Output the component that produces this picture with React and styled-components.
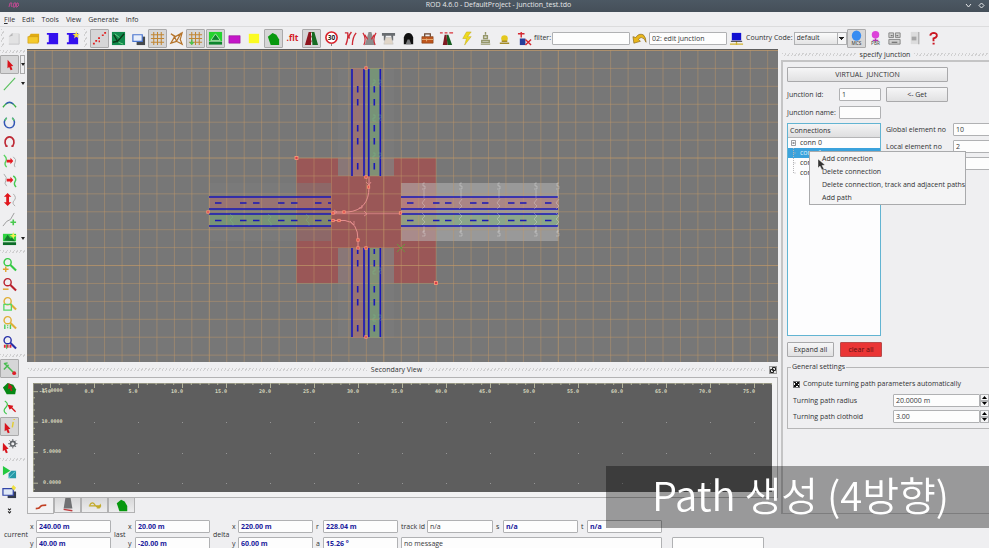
import React from "react";
import styled, { createGlobalStyle, css } from "styled-components";

const GlobalStyle = createGlobalStyle`
  * { box-sizing: border-box; }
  html, body { margin: 0; height: 100%; overflow: hidden; }
  body, button, input, select { font-family: "Open Sans", "Noto Sans", sans-serif; font-size: 7px; line-height: 10px; color: #303133; }
  button, input, select { margin: 0; padding: 0; border-radius: 0; }
`;

const hatch = css`
  background-image: repeating-linear-gradient(120deg, #d0d0d1 0 1px, transparent 1px 3px);
`;

const Window = styled.div`
  display: flex;
  flex-direction: column;
  height: 100vh;
  overflow: hidden;
  background: #efeff1;
`;

const TitleBar = styled.header`
  display: grid;
  grid-template-columns: 1fr auto 1fr;
  align-items: center;
  flex: none;
  height: 12px;
  padding: 0 0 3px 8px;
  background: linear-gradient(#4c5863, #454f59);
  color: #e6e8ea;
`;

const AppTag = styled.svg`
  width: 11px;
  height: 6px;
`;

const WindowButtons = styled.div`
  display: flex;
  justify-content: flex-end;
  gap: 4px;
  height: 9px;
  padding-right: 3px;
`;

const WindowButton = styled.button`
  width: 9px;
  height: 9px;
  border: 0;
  background: none;
  svg { display: block; width: 9px; height: 9px; }
`;

const MenuBar = styled.nav`
  display: flex;
  align-items: center;
  gap: 7px;
  flex: none;
  height: 15px;
  padding: 2px 0 0 4px;
  border-bottom: 1px solid #dcdcdd;
`;

const MenuItem = styled.button`
  border: 0;
  background: none;
`;

const ToolBar = styled.div`
  display: flex;
  align-items: center;
  flex: none;
  height: 22px;
  padding-left: 1px;
`;

const Grip = styled.span`
  flex: none;
  width: ${(p) => (p.$vertical ? "3px" : "auto")};
  height: ${(p) => (p.$vertical ? "18px" : "3px")};
  ${hatch}
`;

const ToolGroup = styled.div`
  display: flex;
  flex: none;
  flex-direction: ${(p) => (p.$column ? "column" : "row")};
  ${(p) => (p.$column ? `height: ${p.$size}px;` : `width: ${p.$size}px;`)}
`;

const ToolCell = styled.div`
  display: flex;
  flex: 1 1 0;
  align-items: center;
  gap: 1px;
`;

const ToolButton = styled.button`
  display: flex;
  align-items: center;
  justify-content: center;
  flex: none;
  width: 19px;
  height: 19px;
  border: 1px solid ${(p) => (p.$pressed ? "#aaaaab" : "transparent")};
  border-radius: 1px;
  background: ${(p) => (p.$pressed ? "#d6d6d7" : "transparent")};
  svg { display: block; width: 15px; height: 15px; overflow: visible; }
`;

const DropArrow = styled.button`
  display: flex;
  align-items: center;
  justify-content: center;
  width: 5px;
  height: 19px;
  border: ${(p) => (p.$pressed ? "1px solid #aaaaab" : "0")};
  background: none;
  &::after {
    content: "";
    flex: none;
    border: 2px solid transparent;
    border-top: 3px solid #222;
    border-bottom: 0;
  }
`;

const TextField = styled.input`
  flex: none;
  width: ${(p) => (p.$width ? `${p.$width}px` : "100%")};
  height: 13px;
  padding: 0 2px;
  border: 1px solid #b0b1b3;
  border-radius: 1px;
  background: #fdfdfd;
  font-weight: ${(p) => (p.$strong ? 700 : 400)};
  color: ${(p) => (p.$strong ? "#20209c" : "#37383a")};
`;

const FieldLabel = styled.label`
  white-space: nowrap;
`;

const ToolField = styled.div`
  display: flex;
  align-items: center;
  gap: 1px;
  margin-left: ${(p) => p.$before || 0}px;
`;

const SelectBox = styled.div`
  display: grid;
  grid-template-columns: 1fr 9px;
  width: 53px;
  height: 13px;
  border: 1px solid #b0b1b3;
  background: linear-gradient(#fafafa, #e4e4e5);
  select {
    grid-area: 1 / 1 / 2 / 3;
    appearance: none;
    border: 0;
    padding-left: 2px;
    background: none;
  }
  &::after {
    content: "";
    grid-area: 1 / 2;
    border-left: 1px solid #b0b1b3;
    pointer-events: none;
    background:
      linear-gradient(#222, #222) center 4px / 5px 1px no-repeat,
      linear-gradient(#222, #222) center 5px / 3px 1px no-repeat,
      linear-gradient(#222, #222) center 6px / 1px 1px no-repeat,
      #f5f5f6;
  }
`;

const Body = styled.div`
  display: flex;
  flex: 1;
  min-height: 0;
`;

const SideBar = styled.aside`
  display: flex;
  flex-direction: column;
  flex: none;
  width: 26px;
  padding-top: 1px;
  gap: 2px;
`;

const Center = styled.main`
  display: flex;
  flex-direction: column;
  flex: 1;
  min-width: 0;
  padding-left: 1px;
`;

const Viewport = styled.div`
  flex: 1;
  min-height: 0;
  overflow: hidden;
  background: #777;
  border-top: 1px solid #5e5e5e;
  svg { display: block; width: 100%; height: 100%; }
`;

const DockTitle = styled.div`
  display: grid;
  grid-template-columns: ${(p) => (p.$floating ? "1fr auto 1fr auto" : "1fr auto 1fr")};
  align-items: center;
  gap: 4px;
  flex: none;
  height: ${(p) => p.$height}px;
  padding: 0 1px;
`;

const FloatButton = styled.button`
  width: 8px;
  height: 8px;
  border: 1px solid #999;
  background: #ddd;
  svg { display: block; width: 6px; height: 6px; }
`;

const ProfileFrame = styled.section`
  flex: none;
  padding: 5px;
  border: 1px solid #b2b2b3;
  background: #f2f2f3;
`;

const ProfilePlot = styled.div`
  height: 109px;
  background: #5e5e5e;
  overflow: hidden;
  svg { display: block; width: 100%; height: 100%; }
`;

const TabRow = styled.div`
  display: flex;
  flex: none;
  height: 21px;
`;

const Tab = styled.button`
  display: flex;
  align-items: center;
  justify-content: center;
  width: 27px;
  height: ${(p) => (p.$active ? "16px" : "15px")};
  border: 1px solid #b2b2b3;
  border-top: 0;
  background: ${(p) => (p.$active ? "#f2f2f3" : "linear-gradient(#d8d8d9, #ededee)")};
  svg { width: 14px; height: 14px; }
`;

const JunctionDock = styled.aside`
  display: flex;
  flex-direction: column;
  flex: none;
  width: 208px;
  margin-left: 3px;
  overflow: hidden;
`;

const DockPanel = styled.form`
  flex: 1;
  margin-bottom: 5px;
  padding: 5px 0 0 4px;
  border: 2px solid #c4c4c5;
  border-width: 2px 0 1px 2px;
`;

const PushButton = styled.button`
  width: ${(p) => p.$width}px;
  height: 15px;
  border: 1px solid ${(p) => (p.$danger ? "#b84a4a" : "#a9a9ab")};
  border-radius: 1px;
  background: ${(p) => (p.$danger ? "#ea3535" : "linear-gradient(#f6f6f7, #e1e1e2)")};
  color: ${(p) => (p.$danger ? "#5a1010" : "#303133")};
`;

const IdGrid = styled.div`
  display: grid;
  grid-template-columns: 47px 42px 62px;
  grid-template-rows: 15px 13px;
  column-gap: 5px;
  row-gap: 4px;
  align-items: center;
  margin: 5px 0 4px;
`;

const TreeArea = styled.div`
  display: grid;
  grid-template-columns: 94px 62px 62px;
  column-gap: 5px;
  position: relative;
`;

const Tree = styled.div`
  height: 213px;
  border: 1px solid #62b4d2;
  background: #fdfdfe;
`;

const TreeHeader = styled.div`
  height: 14px;
  padding: 2px;
  border-bottom: 1px solid #b5b5b6;
  background: linear-gradient(#f4f4f5, #dededf);
`;

const TreeList = styled.ul`
  margin: 0;
  padding: 0;
  list-style: none;
`;

const TreeItem = styled.li`
  display: flex;
  align-items: center;
  gap: 4px;
  height: 10px;
  padding-left: 3px;
  color: ${(p) => (p.$selected ? "#d8eefa" : "#303133")};
  background: ${(p) => (p.$selected ? "#3ba2dc" : "none")};
  svg { width: 5px; height: 10px; }
`;

const PropertyList = styled.div`
  display: grid;
  grid-column: span 2;
  grid-template-columns: 62px 62px;
  grid-auto-rows: 13px;
  align-content: start;
  align-items: center;
  gap: 4px 5px;
`;

const ContextMenu = styled.ul`
  position: absolute;
  top: 28px;
  left: 22px;
  width: 157px;
  margin: 0;
  padding: 0;
  list-style: none;
  border: 1px solid #a9aaac;
  background: #f4f4f5;
`;

const ContextItem = styled.button`
  display: block;
  width: 100%;
  height: 13px;
  padding-left: 12px;
  border: 0;
  background: none;
  text-align: left;
  white-space: nowrap;
`;

const Pointer = styled.svg`
  position: absolute;
  top: 36px;
  left: 30px;
  width: 8px;
  height: 11px;
`;

const ButtonRow = styled.div`
  display: flex;
  gap: 6px;
  margin: 6px 0 5px;
`;

const Settings = styled.fieldset`
  display: grid;
  gap: 3px;
  min-width: 0;
  margin: 0;
  padding: 5px 0 5px 5px;
  border: 1px solid #b6b6b7;
  border-right: 0;
  legend { margin-left: -2px; padding: 0 1px; }
`;

const CheckLine = styled.label`
  display: flex;
  align-items: center;
  gap: 3px;
  height: 14px;
  input {
    appearance: none;
    width: 7px;
    height: 7px;
    border: 1px solid #77787a;
    background: #fff;
  }
  input:checked {
    background: linear-gradient(45deg, transparent 40%, #111 40% 60%, transparent 60%), linear-gradient(-45deg, #fff 38%, #111 38% 62%, #fff 62%);
  }
`;

const SettingLine = styled.div`
  display: grid;
  grid-template-columns: 100px 1fr 9px;
  align-items: center;
  height: 13px;
`;

const Stepper = styled.div`
  display: grid;
  grid-template-rows: 1fr 1fr;
  height: 13px;
`;

const StepButton = styled.button`
  display: flex;
  align-items: center;
  justify-content: center;
  min-height: 0;
  border: 1px solid #b0b1b3;
  background: #f5f5f6;
  svg { width: 5px; height: 3px; flex: none; }
`;

const StatusBar = styled.footer`
  display: grid;
  grid-template-columns: 23px 3px 75px 11px 4px 75px 16px 3px 75px 4px 75px 23px 66px 4px 75px 3px 75px 4px 92px;
  grid-template-rows: 13px 13px;
  gap: 4px 3px;
  align-items: center;
  flex: none;
  height: 29px;
  padding: 1px 0 0 4px;
`;

const StatusGroup = styled.span`
  grid-row: 1 / 3;
  grid-column: ${(p) => p.$col};
`;

const StatusLabel = styled.label`
  grid-row: ${(p) => p.$row};
  grid-column: ${(p) => p.$col};
  white-space: nowrap;
`;

const StatusField = styled(TextField)`
  grid-row: ${(p) => p.$row};
  grid-column: ${(p) => p.$col};
`;

const Caption = styled.div`
  position: fixed;
  right: 0;
  bottom: 20px;
  display: flex;
  align-items: center;
  justify-content: center;
  width: 383px;
  height: 62px;
  padding: 0 0 6px 6px;
  background: rgba(0, 0, 0, 0.36);
  color: #fff;
  font-family: "Noto Sans CJK KR", "Noto Sans", sans-serif;
  font-size: 40px;
  font-weight: 350;
  line-height: 56px;
  white-space: nowrap;
`;

const redArrow = (x, y) => <path d={`M${x} ${y}l6 6.500-2.300.3 1.500 3.500-2 .9-1.500-3.600-1.900 1.500z`} fill="#d8141c" />;
const lens = (c) => (
  <g fill="none" stroke={c}>
    <circle cx="6" cy="5.500" r="3.800" strokeWidth="1.500" />
    <path d="M9 8.500l6 6" strokeWidth="2.200" />
  </g>
);
const lattice = "M1 4h14M1 8h14M1 12h14M4 1v14M8 1v14M12 1v14";

const ICONS = {
  newFile: <><path d="M6 2h8v12H3V5z" fill="#e2e2e3" /><path d="M3 14h11V3" fill="none" stroke="#c6c6c7" /><path d="M3 6l4-1V2z" fill="#b5b5b6" /></>,
  open: <><path d="M3 6l2-3h9v9H3z" fill="#e0ab12" /><path d="M2 6h11v7H2z" fill="#f4c92b" stroke="#c79615" strokeWidth=".6" /></>,
  save: <path d="M2 2h12v12H2v-2h2V4H2z" fill="#3411ee" />,
  saveAs: <><path d="M2 2h12v12H2v-2h2V4H2z" fill="#3411ee" /><path d="M12 0l1 3 3 .2-2.400 1.600 1 3L12 6.200 9.600 8l.8-3L8 3.200 11 3z" fill="#f3df43" /></>,
  points: <path d="M1 13.500h2M3.500 10.500h2M6.500 7.500h2M7 11h1.500M10.500 4.500h2M13 2h2" stroke="#e02222" strokeWidth="1.800" />,
  terrain: <><path d="M1 1h14v14H1z" fill="#128a4d" /><path d="M3 4l4 7 7-8M7 11l-5 1" stroke="#0a3b18" strokeWidth="1.500" fill="none" /><path d="M4 3l5 4M8 12l5 2" stroke="#6fd388" /></>,
  windows: <><path d="M6 6h9v9H6z" fill="#45494d" /><path d="M2 4h10v7H2z" fill="#e9effa" stroke="#4b76d0" strokeWidth="1.300" /></>,
  grid: <path d={lattice} stroke="#c18633" strokeWidth="1.100" />,
  mesh: <path d="M2 3l5 3 7-4-2 7 2 5-6-3-6 2 4-7zM6 6l2 5M13 2L8 11" fill="none" stroke="#b5742a" strokeWidth="1.300" />,
  gridPin: <><path d={lattice} stroke="#c18633" strokeWidth="1.100" /><path d="M2 12l2 2 2-2M4 9v5" fill="none" stroke="#4ac34d" strokeWidth="1.500" /></>,
  scenery: <><path d="M1 1h14v10H1z" fill="#25d32f" /><path d="M3 10l5-7 5 7z" fill="#0d852d" stroke="#c8f2c8" strokeWidth=".8" /><path d="M1 13h14" stroke="#0d852d" strokeWidth="3" /></>,
  magenta: <path d="M2 5h12v8H2z" fill="#c416c8" stroke="#8e1692" strokeWidth=".6" />,
  yellow: <path d="M3 3h11v10H3z" fill="#fbfb23" />,
  shape: <path d="M2 6l5-4 4 2 3 5v6H5z" fill="#07980e" />,
  flt: <text x="8" y="11" textAnchor="middle" fontSize="9" fontWeight="700" fontFamily="Noto Sans" fill="#d31a22">.flt</text>,
  road: <><path d="M5 1h3v14H1z" fill="#8e1620" /><path d="M8 1h3l4 14H9z" fill="#166b22" /><path d="M8 2v3M8 7v3M8 12v3" stroke="#e9e9e9" /></>,
  speed: <><circle cx="8" cy="7" r="6" fill="#fff" stroke="#d9212a" strokeWidth="1.700" /><path d="M8 13.500V16" stroke="#777" /><text x="8" y="9.500" textAnchor="middle" fontSize="7" fontWeight="700" fontFamily="Noto Sans" fill="#222">30</text></>,
  lines: <path d="M2 2h3Q6 7 3 15M9 1Q5 6 7 8M14 2q-4 5-4 13" fill="none" stroke="#ce2b36" strokeWidth="1.500" />,
  cross: <><path d="M7 1h3l4 14H3z" fill="#8c8c8c" /><path d="M1 2q4 6 1 13M15 2q-4 6-1 13M3 4l3 5M13 4l-3 5" fill="none" stroke="#ce2b36" strokeWidth="1.300" /></>,
  bridge: <><path d="M1 2h14v3H1zM3 5h2v5H3zM11 5h2v5h-2z" fill="#686c70" /><path d="M3 14l2-7h6l2 7z" fill="#e1d6c8" stroke="#bbb" strokeWidth=".5" /></>,
  tunnel: <><path d="M3 14V7q1-5 5-5t5 5v7z" fill="#111" /><path d="M5 14l2-5h2l2 5z" fill="#77797b" /></>,
  box: <><path d="M2 6h12v7H2z" fill="#be551d" stroke="#7d3912" strokeWidth=".6" /><path d="M5 6V3h6v3" fill="none" stroke="#6a432c" strokeWidth="1.300" /><path d="M2 9h12M7 8v3" stroke="#ecb37b" /></>,
  barrier: <><path d="M8 4h2l4 11H9z" fill="#175d20" /><path d="M6 4h2l1 11H4z" fill="#801b22" /><path d="M1 2h3M6 2h3M11 2h4" stroke="#d9343b" strokeWidth="1.500" /></>,
  bolt: <path d="M8 1L4 8h4l-2 7 7-9H9l4-5z" fill="#efda1c" stroke="#bda512" strokeWidth=".5" />,
  bell: <path d="M8 1v3M6 5h4v3H6zM4 10h8v2H4zM3 14h10" fill="none" stroke="#96986b" strokeWidth="1.500" />,
  lamp: <><circle cx="8" cy="8" r="3.500" fill="#e4c81e" /><path d="M3 13h10M5 11h6" stroke="#a58c29" strokeWidth="1.500" /></>,
  delBox: <><path d="M3 8h6v7H3z" fill="#263d9b" /><path d="M1 3h7M4.500 1v6M9 9l6 6M15 9l-6 6" stroke="#d42730" strokeWidth="1.500" /></>,
  undo: <path d="M2 13L1 6l3 1Q7 2 12 4q3 3 3 8-2-5-5-5-2 0-3 2l2 2z" fill="#e9b61b" stroke="#86661a" strokeWidth=".7" />,
  monitor: <><path d="M3 2h10v8H3z" fill="#1211d1" /><path d="M1 14h14M8 11v4" stroke="#d1b22d" strokeWidth="1.400" /><path d="M2 11h12" stroke="#292b34" /></>,
  mcs: <><ellipse cx="8" cy="5" rx="5" ry="5.500" fill="#378cf2" /><text x="8" y="15" textAnchor="middle" fontSize="5" fontFamily="Noto Sans" fill="#333">MCS</text></>,
  pbr: <><circle cx="8" cy="4" r="4" fill="#dc43d9" /><path d="M8 8v3M5 10h6" stroke="#b136ae" strokeWidth="1.500" /><text x="8" y="15" textAnchor="middle" fontSize="5" fontFamily="Noto Sans" fill="#444">PBR</text></>,
  keys: <><path d="M2 2h5v5H2zM9 2h5v5H9zM2 9h12v5H2z" fill="#cfcfcf" stroke="#858585" /><path d="M4 5h2M10 5h2M5 12h6" stroke="#555" /></>,
  panelIcon: <><path d="M4 1h9v13H4z" fill="#dcdcdd" /><path d="M12.500 1v13" stroke="#b4b4b5" strokeWidth="1.500" /><path d="M5 6h5v4H5z" fill="#a6a6a7" /></>,
  help: <path d="M4.500 5Q5 2 8.500 2 12 2.500 11.500 5.500 11 7 8 8v3M7 13.500h2.200" fill="none" stroke="#ca1722" strokeWidth="2" />,
  select: redArrow(6, 3),
  line: <path d="M2 15L14 2" stroke="#58c05c" strokeWidth="1.200" />,
  arc: <><path d="M1 12q7-10 14 0" fill="none" stroke="#3aae45" strokeWidth="1.400" /><path d="M4 8.500q4-3.500 8 0" fill="none" stroke="#3459b5" strokeWidth="1.600" /></>,
  circle: <><path d="M5 3q-5 5-.5 9.500 3.500 2.500 7 0Q15.500 8 11 3" fill="none" stroke="#3155b4" strokeWidth="1.500" /><path d="M5 3L3 6M11 3l2 3" stroke="#5ccc67" strokeWidth="1.500" /></>,
  magnet: <path d="M6 13H4.500Q2.500 10 3.500 6.500 5 3 8 3t4.500 3.500Q13.500 10 11.500 13H10" fill="none" stroke="#be2935" strokeWidth="1.800" />,
  joinA: <><path d="M2 1q4 4 2 7t1 6" fill="none" stroke="#59d361" strokeWidth="1.500" /><path d="M12 3q4 3 2 6t0 5" fill="none" stroke="#aaa" /><path d="M5 6h4V4l3 3.500L9 11V9H5z" fill="#e51b22" /></>,
  joinB: <><path d="M2 1q4 4 2 7t1 6" fill="none" stroke="#aaa" /><path d="M12 3q4 3 2 6t1 6" fill="none" stroke="#47c952" strokeWidth="1.500" /><path d="M5 6h4V4l3 3.500L9 11V9H5z" fill="#e51b22" /></>,
  vertical: <><path d="M6 1l4 4H7.500v6H10l-4 4-4-4h2.500V5H2z" fill="#e0161d" /><path d="M12 2q4 4 1 7t1 6" fill="none" stroke="#aaa" /></>,
  addPoint: <><path d="M1 15l4-5 4-2 4-7" fill="none" stroke="#999" /><path d="M9 11h6M12 8v6" stroke="#49c94f" strokeWidth="1.700" /></>,
  image: <><path d="M1 3h14v8H1z" fill="#30d341" /><path d="M2 10l4-6 3 4 2-1 3 4z" fill="#147e2b" /><path d="M1 12h14v3H1z" fill="#0c6c27" /><path d="M12 1l1 3 3 1-3 1-1 3-1-3-3-1 3-1z" fill="#f4ef51" /></>,
  zoomIn: <>{lens("#35c944")}<path d="M1 13h6M4 10v6" stroke="#e0a22d" strokeWidth="1.500" /></>,
  zoomOut: <>{lens("#b9202d")}<path d="M1 13h6" stroke="#e0a22d" strokeWidth="1.500" /></>,
  zoomArea: <>{lens("#e0ae35")}<path d="M2 9h8v6H2z" fill="none" stroke="#58d765" strokeWidth="1.400" /></>,
  zoomOne: <>{lens("#e0ae35")}<path d="M3 10v5M9 10v5M6 11v1M6 13v1" stroke="#4bcc57" strokeWidth="1.500" /></>,
  zoomPick: <>{lens("#2730a8")}<path d="M2 12h8" stroke="#e32837" strokeWidth="3" strokeDasharray="2 1" /><path d="M5 10v5" stroke="#32ad47" /></>,
  snap: <><path d="M3 3l10 10M2 9l5-5M6 2L2 3" fill="none" stroke="#48bb50" strokeWidth="1.600" /><circle cx="13" cy="13" r="2" fill="#dc2028" /></>,
  pickShape: <><path d="M1 7l5-5 6 2 3 5-1 5H5z" fill="#078814" /><path d="M7 2l5 5-2 .3 1 3-1.500.5-1.300-3L6.500 9z" fill="#c21a1f" /></>,
  pickLine: <><path d="M3 1q5 3 1 7t1 7" fill="none" stroke="#3fc64c" strokeWidth="1.300" /><path d="M6 5l6 1-1 2 4 4-1 1-4-4-2 1z" fill="#d8141c" /></>,
  pickInfo: <>{redArrow(3, 4)}<path d="M12 3l-1 6M13 0v1" stroke="#e2cd30" strokeWidth="1.500" /></>,
  pickGear: <>{redArrow(1, 4)}<circle cx="11.500" cy="5" r="2.500" fill="none" stroke="#606468" strokeWidth="1.700" /><path d="M11.500 0v2M11.500 8v2M6.500 5h2M14.500 5h2M8 1.500l1.500 1.500M15 1.500L13.500 3M8 8.500L9.500 7M15 8.500L13.500 7" stroke="#606468" /></>,
  run: <><path d="M1 1l8 5-8 5z" fill="#24c93f" /><path d="M7 9l3-3h5v8H7z" fill="#2698a6" /><path d="M7 14l7-7" stroke="#81d8e1" /></>,
  newWindow: <><path d="M6 8h9v7H6z" fill="#333b4c" /><path d="M1 5h11v7H1z" fill="#dfe9f7" stroke="#3346a8" strokeWidth="1.300" /><path d="M12 1l3 3-2 3-3-3z" fill="#f0e144" /></>,
  more: <path d="M6.500 6L8 7.500 9.500 6M6.500 9L8 10.500 9.500 9" fill="none" stroke="#222" strokeWidth="1.200" />,
  tabTrack: <path d="M2 11q4 0 5-2t7-2" fill="none" stroke="#c24124" strokeWidth="1.800" />,
  tabRoad: <><path d="M5 0h6l2 12H3z" fill="#707173" /><path d="M3 13l10 1.500" stroke="#c03a3d" strokeWidth="1.600" /></>,
  tabBand: <path d="M1 9h14M2 8q3-5 6 0t6 0q1 4-4 3" fill="none" stroke="#c2a927" strokeWidth="1.400" />,
};

const Icon = ({ name }) => <svg viewBox="0 0 16 16" aria-hidden="true">{ICONS[name]}</svg>;

const Tool = ({ name, pressed, menu }) => (
  <ToolCell>
    <ToolButton type="button" aria-label={name} aria-pressed={!!pressed} $pressed={pressed}><Icon name={name} /></ToolButton>
    {menu && <DropArrow type="button" aria-label={`${name} options`} $pressed={pressed} />}
  </ToolCell>
);

const pressedTools = new Set(["points", "grid", "gridPin", "scenery", "shape", "road", "mcs", "select", "snap", "pickInfo"]);
const fileTools = ["newFile", "open", "save", "saveAs"];
const viewTools = ["points", "terrain", "windows", "grid", "mesh", "gridPin", "scenery", "magenta", "yellow", "shape", "flt", "road", "speed", "lines", "cross", "bridge", "tunnel", "box", "barrier", "bolt", "bell", "lamp", "delBox"];
const modelTools = ["mcs", "pbr", "keys", "panelIcon", "help"];
const sideGroups = [
  { size: 193, tools: ["select", "line", "arc", "circle", "magnet", "joinA", "joinB", "vertical", "addPoint", "image"] },
  { size: 97, tools: ["zoomIn", "zoomOut", "zoomArea", "zoomOne", "zoomPick"] },
  { size: 97, tools: ["snap", "pickShape", "pickLine", "pickInfo", "pickGear"] },
  { size: 57, tools: ["run", "newWindow", "more"] },
];
const withMenu = new Set(["select", "line", "image"]);
const tools = (names) => names.map((n) => <Tool key={n} name={n} pressed={pressedTools.has(n)} menu={withMenu.has(n)} />);

const range = (n) => Array.from({ length: n }, (_, i) => i);

const vDashes = [86, 99, 125, 138, 163, 260, 286, 299, 325];
const leftDashes = [215, 240, 253, 278, 291, 315];
const rightDashes = [407, 433, 445, 470, 482, 508, 520, 545];
const nodes = [[366, 68], [208, 212], [333, 213], [344, 212], [366, 177], [368.5, 187], [333, 220.5], [339, 220.5], [358, 240], [358, 248], [366, 248], [366, 337], [400.500, 213]];

const RoadMap = () => (
  <svg viewBox="27 50 751 330" preserveAspectRatio="xMinYMin slice" role="img" aria-label="Junction map">
    <rect x="296.500" y="158" width="139.500" height="125" fill="#9a5757" />
    <g fill="#7e7e7e" fillOpacity=".45">
      <path d="M338 68h56v108h-56zM338 248h56v90h-56zM209 183h122v58H209z" />
      <path d="M338 158h56v18h-56zM338 248h56v35h-56z" fill="#858585" fillOpacity=".5" />
    </g>
    <rect x="401" y="183" width="157.500" height="58" fill="#b6b6b6" fillOpacity=".55" />
    <g fill="#c26a6a" fillOpacity=".4">
      <path d="M352 68h12v108h-12zM352 248h12v90h-12zM209 197h122v12H209zM401 197h158v12H401z" />
    </g>
    <g fill="#74b874" fillOpacity=".4">
      <path d="M369 68h11v108h-11zM369 248h11v90h-11zM209 214h122v12H209zM401 214h158v12H401z" />
    </g>
    <g stroke="#c39a68" strokeWidth="1">
      {range(43).map((i) => <path key={i} d={`M${34.8 + i * 17.45} 49V700`} strokeOpacity={i % 10 === 0 ? 0.65 : 0.45} />)}
      {range(18).map((i) => <path key={i} d={`M27 ${50.5 + i * 17.92}H2000`} strokeOpacity={i % 6 === 0 ? 0.7 : 0.45} />)}
    </g>
    <g stroke="#1a17b8" strokeWidth="1.600">
      <path d="M352 69V176M364 69V176M368.800 69V176M380.300 69V176M352 248V337M364 248V337M368.800 248V337M380.300 248V337" />
      <path d="M209 197H331M209 209H331M209 214H331M209 226H331M401 197H558M401 209H558M401 214H558M401 226H558" />
      {vDashes.map((y) => <path key={y} d={`M357.700 ${y}v6.500M374.300 ${y}v6.500`} />)}
      <path d="M357.700 249v5M374.300 249v5M328 203h3M328 220.500h3" />
      {[...leftDashes, ...rightDashes].map((x) => <path key={x} d={`M${x} 203h6.500M${x} 220.500h6.500`} />)}
    </g>
    <g fill="none" stroke="#eeeeee" strokeOpacity=".3" strokeWidth="1">
      {[424, 461, 499, 536, 558].map((x) => (
        <path key={x} d={`M${x + 1} 183h-2v3h2v3h-3M${x} 190v8M${x + 1} 199l-3 4 3 3-3 3M${x - 2} 213l3 3-3 3 3 3-3 3M${x} 226v6M${x + 1} 231h-2v2h2v3h-3`} />
      ))}
    </g>
    <g fill="none" stroke="#76c78b" strokeOpacity=".3">
      {[230, 268, 306].map((x) => <path key={x} d={`M${x} 214l3 3-3 3 3 3v3`} />)}
      {[80, 115, 153, 268, 315].map((y) => <path key={y} d={`M373 ${y}h2v3h-2v3h3M378 ${y}h3v3h-2l2 3`} />)}
    </g>
    <g fill="none" stroke="#e78f8f">
      <path d="M333 213.500H401" strokeWidth="1.500" strokeOpacity=".55" />
      <path d="M333 212h15Q369 210 369 187V177M333 220.500h12Q358 222 358 240v8" />
      <path d="M334 210l3 2-3 2M362 205v3h-3M350 221l4 4v-4M364 211l3 3-3 2M366 182l3 3 2-3" strokeWidth=".8" />
    </g>
    <g fill="#d9404a" stroke="#ff9a78" strokeWidth=".8">
      {nodes.map(([x, y]) => <rect key={`${x}-${y}`} x={x - 1.2} y={y - 1.2} width="2.400" height="2.400" />)}
      <rect x="295" y="156.500" width="3" height="3" /><rect x="434.500" y="281.500" width="3" height="3" />
    </g>
    <path d="M397 244l8 8M405 244l-8 8" stroke="#69963c" />
  </svg>
);

const PlotText = styled.text`
  font: 700 5px "DejaVu Sans Mono", monospace;
  fill: #d5d5bd;
`;

const Profile = () => (
  <svg viewBox="33 382 739 120" preserveAspectRatio="xMinYMin slice" role="img" aria-label="Secondary view plot">
    <path d="M33 382.500H2000M33.500 382V492" stroke="#92927f" />
    <g stroke="#b4b49c" strokeWidth="1">
      {range(84).map((i) => <path key={i} d={`M${41.7 + i * 8.8} 382v${i % 5 === 1 ? 5 : 2}`} />)}
      {range(17).map((i) => <path key={i} d={`M33 ${390.7 + i * 6.1}h${i % 5 === 0 ? 5 : 2}`} />)}
    </g>
    {range(17).map((i) => (
      <PlotText key={i} x={89 + (i - 1) * 44} y="392" textAnchor="middle">{((i - 1) * 5).toFixed(1)}</PlotText>
    ))}
    {["15.0000", "10.0000", "5.0000", "0.0000"].map((t, i) => <PlotText key={t} x="52" y={391 + i * 30.5} textAnchor="middle">{t}</PlotText>)}
    <g fill="#969696">
      {range(16).flatMap((i) => [421, 452, 482].map((y) => <rect key={`${i}-${y}`} x={94 + i * 44} y={y} width="1" height="1" />))}
    </g>
  </svg>
);

const Branch = ({ expandable, last }) => (
  <svg viewBox="0 0 5 10">
    {expandable ? <path d="M.5 2.500h4v5h-4zM1 5h3M2.500 4v2" fill="none" stroke="#85878a" strokeWidth=".8" /> : <path d={last ? "M2.500 0v5H5" : "M2.500 0v10M2.500 5H5"} fill="none" stroke="#b5b5b8" strokeDasharray="1 1" />}
  </svg>
);

const Spin = ({ id, label, value }) => (
  <SettingLine>
    <FieldLabel htmlFor={id}>{label}</FieldLabel>
    <TextField id={id} defaultValue={value} />
    <Stepper>
      <StepButton type="button" aria-label={`Increase ${label}`}><svg viewBox="0 0 5 3"><path d="M0 3l2.500-3L5 3z" /></svg></StepButton>
      <StepButton type="button" aria-label={`Decrease ${label}`}><svg viewBox="0 0 5 3"><path d="M0 0l2.500 3L5 0z" /></svg></StepButton>
    </Stepper>
  </SettingLine>
);

const statusFields = [
  { id: "cur-x", label: "x", value: "240.00 m", row: 1, col: 2, strong: true },
  { id: "cur-y", label: "y", value: "40.00 m", row: 2, col: 2, strong: true },
  { id: "last-x", label: "x", value: "20.00 m", row: 1, col: 5, strong: true },
  { id: "last-y", label: "y", value: "-20.00 m", row: 2, col: 5, strong: true },
  { id: "delta-x", label: "x", value: "220.00 m", row: 1, col: 8, strong: true },
  { id: "delta-y", label: "y", value: "60.00 m", row: 2, col: 8, strong: true },
  { id: "radius", label: "r", value: "228.04 m", row: 1, col: 10, strong: true },
  { id: "angle", label: "a", value: "15.26 °", row: 2, col: 10, strong: true },
  { id: "track", label: "track id", value: "n/a", row: 1, col: 12 },
  { id: "s", label: "s", value: "n/a", row: 1, col: 14, strong: true },
  { id: "t", label: "t", value: "n/a", row: 1, col: 16, strong: true },
];

export default function App() {
  return (
    <Window>
      <GlobalStyle />
      <TitleBar>
        <AppTag viewBox="0 0 11 6"><path d="M1 5l1-4h2L3 3l1 2M6 1l-1 4h2l1-4zM9 1L8 5h1l2-2-1-2z" fill="none" stroke="#bd4a91" /></AppTag>
        <span>ROD 4.6.0 - DefaultProject - junction_test.tdo</span>
        <WindowButtons>
          <WindowButton aria-label="Minimize"><svg viewBox="0 0 9 9"><path d="M2 3l2.500 3L7 3" fill="none" stroke="#e6e8ea" /></svg></WindowButton>
          <WindowButton aria-label="Restore"><svg viewBox="0 0 9 9"><path d="M4.500 2L7 4.500 4.500 7 2 4.500z" fill="none" stroke="#e6e8ea" /></svg></WindowButton>
        </WindowButtons>
      </TitleBar>
      <MenuBar>
        <MenuItem><u>F</u>ile</MenuItem>
        {["Edit", "Tools", "View", "Generate", "Info"].map((m) => <MenuItem key={m}>{m}</MenuItem>)}
      </MenuBar>
      <ToolBar>
        <Grip $vertical />
        <ToolGroup $size={78}>{tools(fileTools)}</ToolGroup>
        <ToolField $before={2}><Grip $vertical /></ToolField>
        <ToolField $before={3}><ToolGroup $size={444}>{tools(viewTools)}</ToolGroup></ToolField>
        <ToolField>
          <FieldLabel htmlFor="filter">filter:</FieldLabel>
          <TextField id="filter" $width={78} />
        </ToolField>
        <ToolGroup $size={19}>{tools(["undo"])}</ToolGroup>
        <TextField aria-label="Mode" $width={78} defaultValue="02: edit junction" />
        <ToolGroup $size={19}>{tools(["monitor"])}</ToolGroup>
        <ToolField>
          <FieldLabel htmlFor="country">Country Code:</FieldLabel>
          <SelectBox><select id="country" defaultValue="default"><option>default</option></select></SelectBox>
        </ToolField>
        <ToolGroup $size={97}>{tools(modelTools)}</ToolGroup>
      </ToolBar>
      <Body>
        <SideBar>
          {sideGroups.map((g) => (
            <React.Fragment key={g.tools[0]}>
              <Grip />
              <ToolGroup $column $size={g.size}>{tools(g.tools)}</ToolGroup>
            </React.Fragment>
          ))}
        </SideBar>
        <Center>
          <Viewport><RoadMap /></Viewport>
          <DockTitle $height={15} $floating>
            <Grip /><span>Secondary View</span><Grip />
            <FloatButton aria-label="Float"><svg viewBox="0 0 6 6"><path d="M2.500.5h3v3h-3zM.5 2.500h3v3h-3z" fill="#ddd" stroke="#222" /></svg></FloatButton>
          </DockTitle>
          <ProfileFrame><ProfilePlot><Profile /></ProfilePlot></ProfileFrame>
          <TabRow role="tablist">
            {["tabTrack", "tabRoad", "tabBand", "shape"].map((n, i) => (
              <Tab key={n} role="tab" aria-label={n} aria-selected={i === 0} $active={i === 0}><Icon name={n} /></Tab>
            ))}
          </TabRow>
        </Center>
        <JunctionDock>
          <DockTitle $height={11}><Grip /><span>specify junction</span><Grip /></DockTitle>
          <DockPanel>
            <PushButton type="button" $width={161}>VIRTUAL&nbsp; JUNCTION</PushButton>
            <IdGrid>
              <FieldLabel htmlFor="jid">Junction id:</FieldLabel>
              <TextField id="jid" defaultValue="1" />
              <PushButton type="button" $width={62}>&lt;- Get</PushButton>
              <FieldLabel htmlFor="jname">Junction name:</FieldLabel>
              <TextField id="jname" />
            </IdGrid>
            <TreeArea>
              <Tree>
                <TreeHeader>Connections</TreeHeader>
                <TreeList>
                  <TreeItem><Branch expandable />conn 0</TreeItem>
                  <TreeItem $selected><Branch />conn 1</TreeItem>
                  <TreeItem><Branch />conn 2</TreeItem>
                  <TreeItem><Branch last />conn 3</TreeItem>
                </TreeList>
              </Tree>
              <PropertyList>
                <FieldLabel htmlFor="gel">Global element no</FieldLabel><TextField id="gel" defaultValue="10" />
                <FieldLabel htmlFor="lel">Local element no</FieldLabel><TextField id="lel" defaultValue="2" />
                <span /><TextField aria-label="Element value" />
              </PropertyList>
              <ContextMenu>
                {["Add connection", "Delete connection", "Delete connection, track and adjacent paths", "Add path"].map((t) => (
                  <li key={t}><ContextItem type="button">{t}</ContextItem></li>
                ))}
              </ContextMenu>
              <Pointer viewBox="0 0 8 11"><path d="M1 0l7 6-3 .5 2 3.500-2 1-2-4-2 2z" fill="#333" stroke="#fff" strokeWidth=".4" /></Pointer>
            </TreeArea>
            <ButtonRow>
              <PushButton type="button" $width={47}>Expand all</PushButton>
              <PushButton type="button" $width={42} $danger>clear all</PushButton>
            </ButtonRow>
            <Settings>
              <legend>General settings</legend>
              <CheckLine><input type="checkbox" defaultChecked />Compute turning path parameters automatically</CheckLine>
              <Spin id="radius-path" label="Turning path radius" value="20.0000 m" />
              <Spin id="clothoid" label="Turning path clothoid" value="3.00" />
            </Settings>
          </DockPanel>
        </JunctionDock>
      </Body>
      <StatusBar>
        <StatusGroup $col={1}>current</StatusGroup>
        <StatusGroup $col={4}>last</StatusGroup>
        <StatusGroup $col={7}>delta</StatusGroup>
        {statusFields.map((f) => (
          <React.Fragment key={f.id}>
            <StatusLabel htmlFor={f.id} $row={f.row} $col={f.col}>{f.label}</StatusLabel>
            <StatusField id={f.id} defaultValue={f.value} $row={f.row} $col={f.col + 1} $strong={f.strong} />
          </React.Fragment>
        ))}
        <StatusField aria-label="Message" defaultValue="no message" $row={2} $col="12 / 18" />
        <StatusField aria-label="Progress" $row={2} $col={19} />
      </StatusBar>
      <Caption>Path 생성 (4방향)</Caption>
    </Window>
  );
}
